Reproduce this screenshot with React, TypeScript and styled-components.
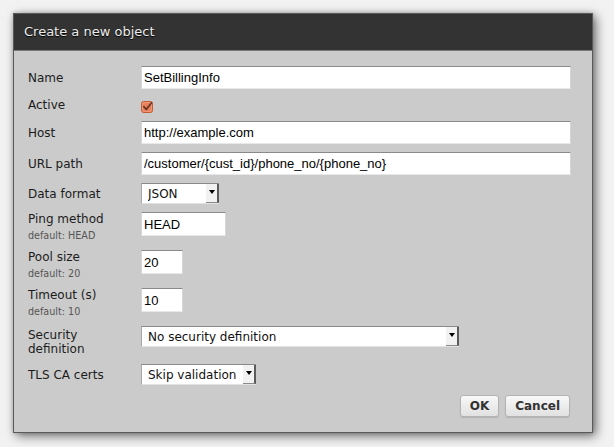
import React from 'react';
import styled, { createGlobalStyle } from 'styled-components';

const GlobalStyle = createGlobalStyle`
  html, body { margin: 0; padding: 0; background: #f2f2f2; }
  body { font-family: "DejaVu Sans", Verdana, sans-serif; }
`;

const Page = styled.div`
  width: 614px;
  height: 447px;
  box-sizing: border-box;
  padding: 13px 21px 15px 13px;
`;

const Dialog = styled.div`
  width: 580px;
  box-sizing: border-box;
  border: 1px solid #5a5a5a;
  background: #cbcbcb;
  box-shadow: 3px 3px 10px rgba(0, 0, 0, 0.55), 0 0 4px rgba(0, 0, 0, 0.18);
`;

const Header = styled.div`
  height: 37px;
  box-sizing: border-box;
  background: #333333;
  border-bottom: 1px solid #7a7a7a;
  color: #ececec;
  font-size: 13px;
  line-height: 36px;
  padding-left: 10px;
  text-shadow: 0 1px 1px #000;
`;

const Body = styled.form`
  margin: 0;
  padding: 15px 21px 15px 14px;
  display: flex;
  flex-direction: column;
  gap: 8px;
`;

const Row = styled.div<{ $top?: boolean }>`
  display: grid;
  grid-template-columns: 113px 1fr;
  align-items: ${(p) => (p.$top ? 'start' : 'center')};
`;

const Label = styled.label<{ $padTop?: number }>`
  display: block;
  font-size: 12px;
  line-height: 14px;
  color: #1c1c1c;
  padding-right: 8px;
  padding-top: ${(p) => p.$padTop ?? 0}px;
`;

const Hint = styled.span`
  display: block;
  font-size: 9.6px;
  line-height: 12px;
  margin-top: 4px;
  color: #555;
`;

const TextInput = styled.input<{ $w?: number; $h?: number }>`
  box-sizing: border-box;
  width: ${(p) => (p.$w ? `${p.$w}px` : '100%')};
  height: ${(p) => p.$h ?? 23}px;
  margin: 0;
  padding: 0 2px;
  font: 13px "Liberation Sans", Arial, sans-serif;
  color: #000;
  background: #fff;
  border: 1px solid;
  border-color: #8a8a8a #d6d6d6 #e8e8e8 #d6d6d6;
  outline: none;
`;

const CheckBox = styled.span`
  align-self: start;
  margin-top: 4px;
  width: 13px;
  height: 12px;
  display: block;
  line-height: 0;
`;

const SelectWrap = styled.div<{ $w: number }>`
  display: grid;
  width: ${(p) => p.$w}px;
  height: 21px;
  box-sizing: border-box;
  background: #fff;
  border-top: 1px solid #8a8a8a;
  border-left: 1px solid #a8a8a8;
  border-bottom: 1px solid #e2e2e2;
`;

const NativeSelect = styled.select`
  grid-area: 1 / 1;
  appearance: none;
  -webkit-appearance: none;
  border: none;
  background: transparent;
  margin: 0;
  padding: 0 0 0 6px;
  height: 100%;
  font: 12px "DejaVu Sans", Verdana, sans-serif;
  color: #111;
  outline: none;
`;

const Arrow = styled.span`
  grid-area: 1 / 1;
  justify-self: end;
  width: 13px;
  height: 100%;
  box-sizing: border-box;
  background: #f1f1f1;
  border-right: 2px solid #5a5a5a;
  border-bottom: 1px solid #8a8a8a;
  display: flex;
  align-items: center;
  justify-content: center;
  pointer-events: none;
  &::after {
    content: '';
    margin-top: -2px;
    border-left: 3px solid transparent;
    border-right: 3px solid transparent;
    border-top: 4px solid #000;
  }
`;

const Actions = styled.div`
  display: flex;
  justify-content: flex-end;
  gap: 6px;
  margin-top: 2px;
  padding-right: 1px;
`;

const Button = styled.button`
  height: 22px;
  box-sizing: border-box;
  margin: 0;
  padding: 0 9px;
  font: bold 12px "DejaVu Sans", Verdana, sans-serif;
  color: #333;
  background: linear-gradient(#f8f8f8, #e1e1e1);
  border: 1px solid #b3b3b3;
  border-radius: 3px;
  box-shadow: 0 1px 1px rgba(0, 0, 0, 0.12);
  cursor: pointer;
`;

const Select: React.FC<{ w: number; value: string; options: string[] }> = ({ w, value, options }) => (
  <SelectWrap $w={w}>
    <NativeSelect defaultValue={value}>
      {options.map((o) => (
        <option key={o}>{o}</option>
      ))}
    </NativeSelect>
    <Arrow />
  </SelectWrap>
);

export default function App() {
  return (
    <Page>
      <GlobalStyle />
      <Dialog>
        <Header>Create a new object</Header>
        <Body onSubmit={(e) => e.preventDefault()}>
          <Row>
            <Label>Name</Label>
            <TextInput defaultValue="SetBillingInfo" />
          </Row>
          <Row>
            <Label>Active</Label>
            <CheckBox role="checkbox" aria-checked="true">
              <svg width="13" height="12" viewBox="0 0 13 12">
                <rect x="0.5" y="0.5" width="11" height="11" rx="2" fill="#e8805a" stroke="#bf5d38" />
                <rect x="1.5" y="1.5" width="9" height="9" rx="1.5" fill="none" stroke="#f09a7a" strokeWidth="0.8" />
                <path d="M2.8 5.6 L5.3 8.4 L10.6 1.8" fill="none" stroke="#6a3624" strokeWidth="1.7" strokeLinecap="round" strokeLinejoin="round" />
              </svg>
            </CheckBox>
          </Row>
          <Row>
            <Label>Host</Label>
            <TextInput defaultValue="http://example.com" />
          </Row>
          <Row>
            <Label>URL path</Label>
            <TextInput defaultValue="/customer/{cust_id}/phone_no/{phone_no}" />
          </Row>
          <Row>
            <Label>Data format</Label>
            <Select w={78} value="JSON" options={['JSON', 'XML']} />
          </Row>
          <Row $top>
            <Label>
              Ping method
              <Hint>default: HEAD</Hint>
            </Label>
            <TextInput $w={85} $h={24} defaultValue="HEAD" />
          </Row>
          <Row $top>
            <Label>
              Pool size
              <Hint>default: 20</Hint>
            </Label>
            <TextInput $w={42} $h={24} defaultValue="20" />
          </Row>
          <Row $top>
            <Label>
              Timeout (s)
              <Hint>default: 10</Hint>
            </Label>
            <TextInput $w={42} $h={24} defaultValue="10" />
          </Row>
          <Row $top>
            <Label $padTop={2}>Security definition</Label>
            <Select w={318} value="No security definition" options={['No security definition']} />
          </Row>
          <Row>
            <Label>TLS CA certs</Label>
            <Select w={115} value="Skip validation" options={['Skip validation']} />
          </Row>
          <Actions>
            <Button type="submit">OK</Button>
            <Button type="button">Cancel</Button>
          </Actions>
        </Body>
      </Dialog>
    </Page>
  );
}
